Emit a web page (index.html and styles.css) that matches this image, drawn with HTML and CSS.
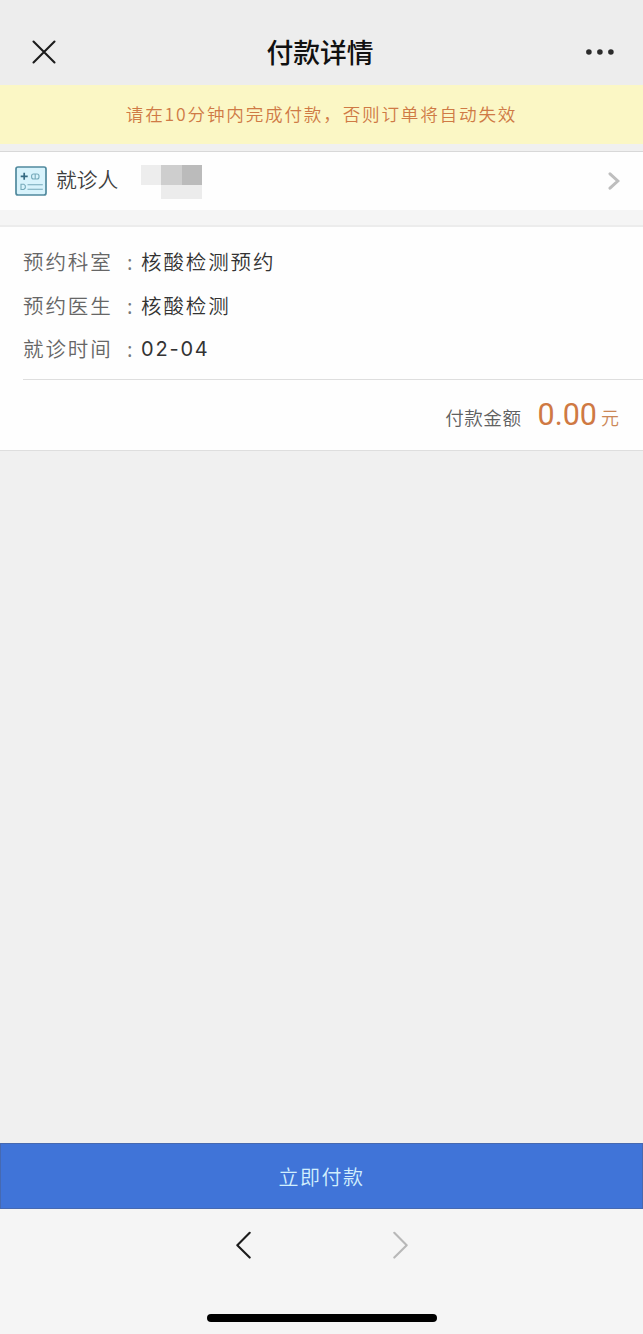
FILE: index.html
```html
<!DOCTYPE html>
<html lang="zh-CN">
<head>
<meta charset="utf-8">
<title>付款详情</title>
<link rel="stylesheet" href="styles.css">
</head>
<body>
<div class="page">
  <header class="header">
    <svg class="close" width="24" height="24" viewBox="0 0 24 24"><path d="M1.5 1.5 22.5 22.5M22.5 1.5 1.5 22.5"/></svg>
    <h1 class="title">付款详情</h1>
    <svg class="more" width="28" height="6" viewBox="0 0 28 6"><circle cx="2.9" cy="3" r="2.8"/><circle cx="13.9" cy="3" r="2.8"/><circle cx="24.9" cy="3" r="2.8"/></svg>
  </header>
  <div class="notice">请在10分钟内完成付款，否则订单将自动失效</div>
  <section class="patient">
    <svg class="card-icon" width="32" height="30" viewBox="0 0 32 30">
      <rect class="card" x="1" y="1" width="30" height="28" rx="2"/>
      <path class="plus" d="M5.7 10.3h7M9.2 6.8v7"/>
      <g class="detail"><rect x="16.6" y="8" width="7.4" height="5" rx="2"/><path d="M20.2 8v5M6 18.2h2.8l1.5 1.5v2.3l-1.5 1.5H6zM12.5 18.7h15.3M12.5 23.3h15.3"/></g>
    </svg>
    <span class="patient-label">就诊人</span>
    <span class="mask"><i class="m1"></i><i class="m2"></i><i class="m3"></i><i class="m4"></i></span>
    <svg class="chevron" width="12" height="18" viewBox="0 0 12 18"><path d="M2 1.8 9.8 9 2 16.2"/></svg>
  </section>
  <section class="order">
    <dl class="details">
      <div class="row"><dt>预约科室</dt><dd class="colon">:</dd><dd>核酸检测预约</dd></div>
      <div class="row"><dt>预约医生</dt><dd class="colon">:</dd><dd>核酸检测</dd></div>
      <div class="row"><dt>就诊时间</dt><dd class="colon">:</dd><dd class="date">02-04</dd></div>
    </dl>
    <div class="total"><span class="total-label">付款金额</span><span class="amount">0.00</span><span class="unit">元</span></div>
  </section>
  <main class="space"></main>
  <button class="pay">立即付款</button>
  <footer class="toolbar">
    <nav class="nav">
      <svg class="back" width="17" height="28" viewBox="0 0 17 28"><path d="M14.7 1.8 2.3 14.2 14.7 26.6"/></svg>
      <svg class="forward" width="17" height="28" viewBox="0 0 17 28"><path d="M2.3 1.8 14.7 14.2 2.3 26.6"/></svg>
    </nav>
    <div class="home-bar"></div>
  </footer>
</div>
</body>
</html>
```
FILE: styles.css
```css
* { box-sizing: border-box; margin: 0; padding: 0; }
body { font-family: "Noto Sans CJK SC", sans-serif; font-weight: 350; background: #f0f0f0; }
svg { display: block; fill: none; flex: none; }
.page { width: 643px; height: 1334px; display: flex; flex-direction: column; overflow: hidden; }
.header { height: 85px; flex: none; background: #ededed; display: grid; grid-template-columns: 1fr auto 1fr; align-items: center; padding: 18px 29px 0 32px; }
.close { stroke: #1c1c1c; stroke-width: 2.1; stroke-linecap: round; }
.title { font-size: 26.8px; line-height: 40px; font-weight: 500; color: #111; padding-right: 6px; }
.more { fill: #2b2b2b; justify-self: end; }
.notice { height: 59px; flex: none; background: #fbf7c5; color: #cf7a45; font-size: 17.6px; line-height: 58px; letter-spacing: 1.8px; text-align: center; white-space: nowrap; }
.patient { height: 59px; flex: none; margin-top: 7px; background: #fefefe; border-top: 1px solid #d8d8d8; display: flex; align-items: center; padding: 0 23px 0 15px; }
.card { fill: #d8f3fc; stroke: #50899d; stroke-width: 1.7; }
.plus { stroke: #356a82; stroke-width: 1.7; }
.detail { stroke: #75a9b9; stroke-width: 1.1; }
.patient-label { margin-left: 9px; padding-bottom: 3px; font-size: 20.8px; line-height: 55px; color: #3e3e3e; }
.mask { display: grid; grid-template: 20px 14px / 20px 21px 20px; margin-left: 23px; margin-top: 1px; }
.m1 { background: #ededed; }
.m2 { background: #cecece; }
.m3 { background: #bbb; }
.m4 { background: #ececec; grid-column: 2 / 4; }
.chevron { stroke: #bebebe; stroke-width: 3; stroke-linecap: round; margin-left: auto; }
.order { flex: none; height: 226px; margin-top: 15px; background: #fefefe; border-top: 2px solid #ececec; border-bottom: 1px solid #dedede; box-shadow: 0 -15px #f5f5f5; }
.details { height: 153px; margin-left: 23px; padding-top: 13px; border-bottom: 1px solid #dedede; }
.row { display: flex; height: 43.5px; line-height: 43.5px; font-size: 20.5px; letter-spacing: 1.9px; color: #333; white-space: nowrap; }
dt { width: 104px; color: #666; }
.colon { width: 14px; color: #777; }
.date { letter-spacing: 1.8px; font-family: Inter, "Noto Sans CJK SC", sans-serif; font-weight: 400; font-size: 20px; line-height: 45px; }
.total { height: 70px; display: flex; align-items: baseline; justify-content: flex-end; padding-right: 24px; line-height: 70px; }
.total-label { font-size: 18.6px; letter-spacing: .5px; color: #606060; margin-right: 16px; }
.amount { font-family: Roboto, sans-serif; font-weight: 400; font-size: 30.5px; color: #cf7943; margin-right: 4px; }
.unit { font-size: 18px; color: #cb8757; }
.space { flex: 1; background: #f0f0f0; }
.pay { height: 66px; flex: none; border: 1px solid #4669b1; background: #4074d8; color: #d2effd; font: 350 20px/66px "Noto Sans CJK SC", sans-serif; letter-spacing: 1.5px; }
.toolbar { height: 125px; flex: none; background: #f5f5f5; display: flex; flex-direction: column; align-items: center; justify-content: space-between; padding: 22px 0 12px; }
.nav { display: flex; gap: 140px; }
.back, .forward { stroke-width: 2.1; stroke-linecap: round; stroke-linejoin: round; stroke: #1c1c1c; }
.forward { stroke: #b8b8b8; }
.home-bar { width: 230px; height: 8px; border-radius: 4px; background: #000; }
```
